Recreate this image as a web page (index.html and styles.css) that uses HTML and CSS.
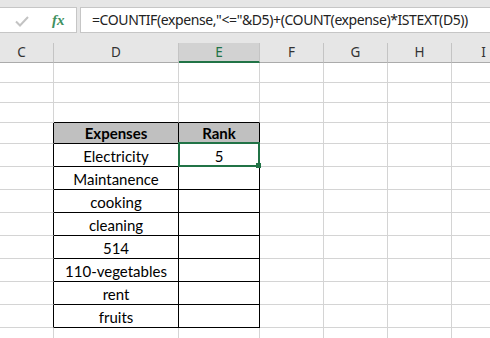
FILE: index.html
```html
<!DOCTYPE html>
<html lang="en">
  <head>
    <meta charset="UTF-8" />
    <title>Rank with COUNTIF</title>
    <link rel="stylesheet" href="styles.css">
  </head>
  <body>
    <div class="formula-bar">
      <div class="tools">
        <svg class="check" width="14" height="11" viewBox="0 0 14 11">
          <polyline points="1,5.5 5,9.5 13,1" fill="none" stroke="#c3c3c3" stroke-width="2" />
        </svg>
        <span class="fx">fx</span>
      </div>
      <div class="formula">=COUNTIF(expense,"&lt;="&amp;D5)+(COUNT(expense)*ISTEXT(D5))</div>
    </div>

    <div class="sheet">
      <div class="head">C</div>
      <div class="head">D</div>
      <div class="head active">E</div>
      <div class="head">F</div>
      <div class="head">G</div>
      <div class="head">H</div>
      <div class="head">I</div>

      <!-- rows 2-3 -->
      <div class="cell"></div><div class="cell"></div><div class="cell"></div><div class="cell"></div><div class="cell"></div><div class="cell"></div><div class="cell"></div>
      <div class="cell"></div><div class="cell"></div><div class="cell"></div><div class="cell"></div><div class="cell"></div><div class="cell"></div><div class="cell"></div>
      <!-- row 4, sits on top of the table -->
      <div class="cell"></div><div class="cell top-edge"></div><div class="cell top-edge"></div><div class="cell"></div><div class="cell"></div><div class="cell"></div><div class="cell"></div>

      <div class="cell left-edge"></div>
      <div class="cell box th">Expenses</div>
      <div class="cell box th">Rank</div>
      <div class="cell"></div><div class="cell"></div><div class="cell"></div><div class="cell"></div>

      <div class="cell left-edge"></div>
      <div class="cell box">Electricity</div>
      <div class="cell box selected">5</div>
      <div class="cell"></div><div class="cell"></div><div class="cell"></div><div class="cell"></div>

      <div class="cell left-edge"></div>
      <div class="cell box">Maintanence</div>
      <div class="cell box"></div>
      <div class="cell"></div><div class="cell"></div><div class="cell"></div><div class="cell"></div>

      <div class="cell left-edge"></div>
      <div class="cell box">cooking</div>
      <div class="cell box"></div>
      <div class="cell"></div><div class="cell"></div><div class="cell"></div><div class="cell"></div>

      <div class="cell left-edge"></div>
      <div class="cell box">cleaning</div>
      <div class="cell box"></div>
      <div class="cell"></div><div class="cell"></div><div class="cell"></div><div class="cell"></div>

      <div class="cell left-edge"></div>
      <div class="cell box">514</div>
      <div class="cell box"></div>
      <div class="cell"></div><div class="cell"></div><div class="cell"></div><div class="cell"></div>

      <div class="cell left-edge"></div>
      <div class="cell box">110-vegetables</div>
      <div class="cell box"></div>
      <div class="cell"></div><div class="cell"></div><div class="cell"></div><div class="cell"></div>

      <div class="cell left-edge"></div>
      <div class="cell box">rent</div>
      <div class="cell box"></div>
      <div class="cell"></div><div class="cell"></div><div class="cell"></div><div class="cell"></div>

      <div class="cell left-edge"></div>
      <div class="cell box">fruits</div>
      <div class="cell box"></div>
      <div class="cell"></div><div class="cell"></div><div class="cell"></div><div class="cell"></div>

      <div class="cell"></div><div class="cell"></div><div class="cell"></div><div class="cell"></div><div class="cell"></div><div class="cell"></div><div class="cell"></div>
    </div>
  </body>
</html>
```

FILE: styles.css
```css
* {
  box-sizing: border-box;
}
html,
body {
  margin: 0;
  padding: 0;
  width: 490px;
  height: 338px;
  overflow: hidden;
  background: #fff;
}

.formula-bar {
  height: 43px;
  background: #e6e6e6;
  padding-top: 7px;
  display: flex;
  gap: 3px;
}
.tools {
  flex: none;
  width: 77px;
  height: 26px;
  background: #fff;
  border: 1px solid #c6c6c6;
  border-left: none;
  display: flex;
  align-items: center;
  padding-left: 15px;
}
.check {
  margin-top: 2px;
}
.fx {
  margin-left: 23px;
  font-family: "Liberation Serif", serif;
  font-style: italic;
  font-weight: bold;
  font-size: 15px;
  color: #3f9161;
}
.formula {
  flex: 1;
  min-width: 0;
  height: 26px;
  background: #fff;
  border: 1px solid #c6c6c6;
  border-right: none;
  padding-left: 11px;
  font-family: "Noto Sans", sans-serif;
  font-size: 14px;
  letter-spacing: -0.4px;
  line-height: 24px;
  color: #222;
  white-space: nowrap;
}

.sheet {
  display: grid;
  grid-template-columns: 64px 125px 81px 64px 64px 64px 64px;
  grid-template-rows: 20px 20px 20px 20px 21px repeat(8, 23px) 20px;
  margin-left: -10px;
  font-family: Lato, sans-serif;
  font-size: 15px;
  color: #000;
}
.head {
  background: #e6e6e6;
  border-right: 1px solid #c4c4c4;
  border-bottom: 1px solid #ababab;
  font-family: "Noto Sans", sans-serif;
  font-size: 13.5px;
  color: #333;
  text-align: center;
  line-height: 18px;
}
.head.active {
  background: #d2d2d2;
  border-bottom: 2px solid #217346;
  color: #217346;
}
.cell {
  border-right: 1px solid #d4d4d4;
  border-bottom: 1px solid #d4d4d4;
}
.top-edge {
  border-bottom-color: #000;
}
.left-edge {
  border-right-color: #000;
}
.box {
  border-color: #000;
  display: flex;
  align-items: flex-end;
  justify-content: center;
  padding-bottom: 1px;
  white-space: nowrap;
}
.th {
  background: #c0c0c0;
  font-weight: bold;
}
.selected {
  position: relative;
}
.selected::after {
  content: "";
  position: absolute;
  left: -1px;
  right: -1px;
  top: -2px;
  bottom: -1px;
  border: 2px solid #217346;
}
.selected::before {
  content: "";
  position: absolute;
  right: -2px;
  bottom: -2px;
  width: 5px;
  height: 5px;
  background: #217346;
  z-index: 1;
}
```
